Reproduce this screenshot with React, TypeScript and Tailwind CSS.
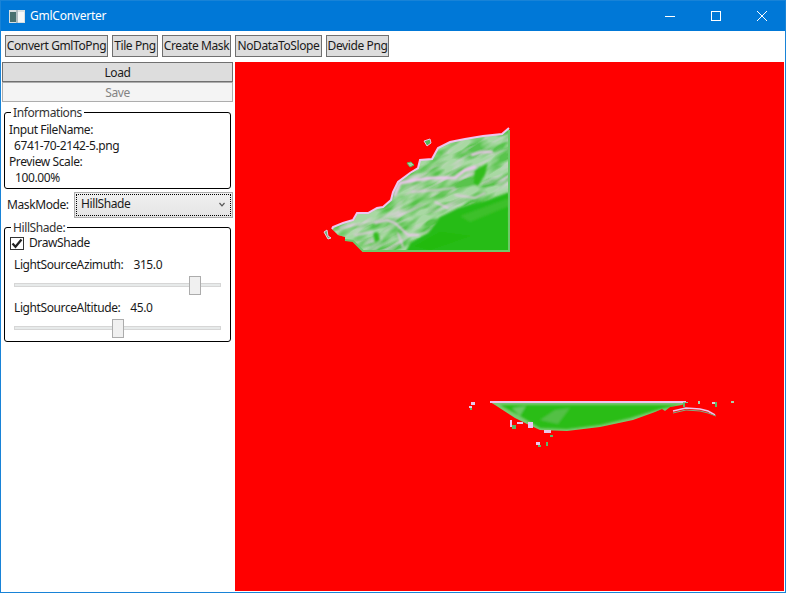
const toolbar = [
  { label: 'Convert GmlToPng', width: 'w-[103px]' },
  { label: 'Tile Png', width: 'w-[46px]' },
  { label: 'Create Mask', width: 'w-[69px]' },
  { label: 'NoDataToSlope', width: 'w-[87px]' },
  { label: 'Devide Png', width: 'w-[63px]' },
]

function Slider({ label, value, gap, thumb }: { label: string; value: string; gap: string; thumb: string }) {
  return (
    <div className="flex flex-col">
      <div className="flex h-[16px] items-center pl-[9px] leading-[16px]">
        <span>{label}</span>
        <span className={gap}>{value}</span>
      </div>
      <div className="relative mt-[10px] ml-[9px] h-[4px] w-[207px] border border-[#d6d6d6] bg-[#e7eaea]">
        <div className={`absolute top-[-8px] h-[19px] w-[12px] border border-[#acacac] bg-[#f0f0f0] ${thumb}`} />
      </div>
    </div>
  )
}

function TerrainMap() {
  return (
    <svg viewBox="235 62 549 529" className="block h-[529px] w-[549px]">
      <defs>
        <filter id="soft" x="-10%" y="-10%" width="120%" height="120%">
          <feGaussianBlur stdDeviation="0.8" />
        </filter>
        <filter id="pinkNoise" x="0" y="0" width="100%" height="100%" colorInterpolationFilters="sRGB">
          <feTurbulence type="fractalNoise" baseFrequency="0.035 0.16" numOctaves="2" seed="7" />
          <feColorMatrix values="0 0 0 0 0.9  0 0 0 0 0.8  0 0 0 0 0.9  2.4 0 0 0 -1.2" />
        </filter>
        <filter id="greenNoise" x="0" y="0" width="100%" height="100%" colorInterpolationFilters="sRGB">
          <feTurbulence type="fractalNoise" baseFrequency="0.04 0.12" numOctaves="2" seed="21" />
          <feColorMatrix values="0 0 0 0 0.35  0 0 0 0 0.77  0 0 0 0 0.3  3.6 0 0 0 -1.4" />
        </filter>
        <clipPath id="north">
          <path d="M509 128 L502 134 L483 136 L465 139 L450 142 L438 148 L432 159 L420 160 L418 168 L410 173 L398 182 L393 192 L391 200 L383 207 L377 208 L368 213 L357 213 L353 220 L343 223 L333 227 L332 229 L338 235 L345 237 L345 240 L353 241 L363 252 L510 251 Z" />
        </clipPath>
        <clipPath id="south">
          <path d="M490 402 L686 402 L682 405 L670 407 L665 411 L662 409 L655 412 L633 420 L600 427 L567 431 L540 430 L527 424 L515 418 L495 405 Z" />
        </clipPath>
      </defs>
      <rect x="235" y="62" width="549" height="529" fill="#ff0000" />

      {/* north patch */}
      <g clipPath="url(#north)">
        <rect x="325" y="125" width="190" height="130" fill="#a9d8a3" />
        <g transform="rotate(-28 420 190)">
          <rect x="290" y="80" width="260" height="220" filter="url(#greenNoise)" />
          <rect x="290" y="80" width="260" height="220" filter="url(#pinkNoise)" />
        </g>
        <g filter="url(#soft)">
          <path d="M473 183 L475 170 L488 163 L485 175 L478 186 Z" fill="#33be1f" />
          <path d="M373 233 L378 232 L380 240 L375 243 Z" fill="#33be1f" />
          <g fill="none" stroke="#f0c6f0" strokeLinecap="round">
            <path d="M395 195 L400 183 L415 180 L432 178 L455 178 L465 170 L475 167" strokeWidth="3" />
            <path d="M472 155 L482 152 L492 152" strokeWidth="2.5" />
            <path d="M375 223 L387 220 L395 223 L408 235 L418 235" strokeWidth="2" />
            <path d="M398 233 L403 247" strokeWidth="1.5" />
            <path d="M355 235 L372 232" strokeWidth="1.5" />
            <path d="M435 202 L448 208" strokeWidth="1.5" />
            <path d="M455 195 L475 198 L485 193" strokeWidth="1.5" />
            <path d="M412 192 L438 190 L455 188" strokeWidth="1.5" />
            <path d="M340 228 L360 224" strokeWidth="1.5" />
          </g>
          <path d="M509 192 L488 200 L458 208 L440 217 L428 233 L410 243 L406 252 L510 252 Z" fill="#27bc13" />
          <path d="M460 216 L509 198 L509 206 L470 222 Z" fill="#3cc02b" />
          <path d="M415 246 L440 232 L470 236 L430 250 Z" fill="#21ba0d" />
        </g>
      </g>
      <path
        d="M509 128 L502 134 L483 136 L465 139 L450 142 L438 148 L432 159 L420 160 L418 168 L410 173 L398 182 L393 192 L391 200 L383 207 L377 208 L368 213 L357 213 L353 220 L343 223 L333 227 L332 229"
        fill="none"
        stroke="#f0c4f0"
        strokeWidth="2"
      />
      <path d="M345 240 L353 241 L363 251 L509 251 L509 130" fill="none" stroke="#6fc968" strokeWidth="2" />
      <path d="M424 141 L430 139 L431 143 L427 146 Z" fill="#52b95a" stroke="#e8c8e8" strokeWidth="1" />
      <path d="M407 163 L411 162 L414 165 L410 167 Z" fill="#a8cfa8" stroke="#58b858" strokeWidth="1" />
      <path d="M324 232 L327 230 L328 236 L331 238 L328 239 Z" fill="#70b878" stroke="#e8c8e8" strokeWidth="1" />

      {/* south patch */}
      <g clipPath="url(#south)">
        <rect x="485" y="400" width="205" height="35" fill="#7ccb73" />
        <g filter="url(#soft)">
          <path d="M500 405 L680 405 L660 409 L630 418 L600 425 L567 429 L540 428 L520 416 Z" fill="#2bbd17" />
          <path d="M512 408 L526 406 L520 416 Z" fill="#6cc862" />
          <path d="M540 420 L555 410 L570 408 L558 424 Z" fill="#52c044" />
        </g>
      </g>
      <path d="M490 402 L686 402" fill="none" stroke="#efc4ef" strokeWidth="2" />
      <path d="M673 411 L686 408 L700 409 L708 411 L715 415" fill="none" stroke="#f0c4f0" strokeWidth="1.5" />
      <path d="M673 413 L686 410 L700 411 L708 413 L716 416" fill="none" stroke="#7fae7f" strokeWidth="1" />
      <g shapeRendering="crispEdges">
        <rect x="471" y="402" width="4" height="3" fill="#e8c8e8" />
        <rect x="469" y="406" width="3" height="2" fill="#e8c8e8" />
        <rect x="470" y="408" width="2" height="2" fill="#5fb868" />
        <rect x="510" y="420" width="2" height="7" fill="#efc4ef" />
        <rect x="512" y="425" width="4" height="4" fill="#5fb868" />
        <rect x="517" y="422" width="6" height="2" fill="#efc4ef" />
        <rect x="528" y="422" width="5" height="6" fill="#efc4ef" />
        <rect x="544" y="430" width="7" height="3" fill="#e8c8e8" />
        <rect x="550" y="435" width="3" height="2" fill="#5fb868" />
        <rect x="536" y="442" width="4" height="3" fill="#efc4ef" />
        <rect x="538" y="445" width="3" height="2" fill="#5fb868" />
        <rect x="546" y="442" width="2" height="4" fill="#5fb868" />
        <rect x="683" y="402" width="5" height="1" fill="#8fc08f" />
        <rect x="683" y="403" width="2" height="4" fill="#5fb868" />
        <rect x="698" y="401" width="2" height="3" fill="#a8d0a8" />
        <rect x="712" y="402" width="5" height="2" fill="#d8d0d8" />
        <rect x="715" y="402" width="2" height="5" fill="#5fb868" />
        <rect x="731" y="401" width="3" height="2" fill="#a8d0a8" />
      </g>
    </svg>
  )
}

export default function App() {
  return (
    <div className="flex h-[593px] w-[786px] flex-col overflow-hidden border border-[#1883d7] bg-white font-['Noto_Sans',sans-serif] text-[12px] tracking-[-0.4px] text-[#1a1a1a]">
      {/* Title bar */}
      <div className="flex h-[30px] items-center bg-[#0078d7] tracking-[-0.25px] text-white">
        <svg width="16" height="13" viewBox="0 0 16 13" className="ml-[8px]">
          <rect x="0" y="0" width="16" height="13" fill="#d8e0e2" />
          <rect x="1" y="2" width="6" height="10" fill="#47706f" />
          <rect x="9" y="2" width="6" height="10" fill="#f4f7f7" />
          <rect x="7" y="0" width="2" height="13" fill="#aebcc0" />
        </svg>
        <span className="ml-[5px]">GmlConverter</span>
        <div className="ml-auto flex h-full">
          <div className="flex w-[46px] items-center justify-center">
            <div className="h-px w-[10px] bg-white" />
          </div>
          <div className="flex w-[46px] items-center justify-center">
            <div className="h-[10px] w-[10px] border border-white" />
          </div>
          <div className="flex w-[46px] items-center justify-center">
            <svg width="10" height="10" viewBox="0 0 10 10" stroke="white" strokeWidth="1">
              <path d="M0 0 L10 10 M10 0 L0 10" />
            </svg>
          </div>
        </div>
      </div>

      {/* Toolbar */}
      <div className="flex h-[31px] items-start gap-[4px] bg-white pl-[4px] pt-[4px]">
        {toolbar.map(b => (
          <button
            key={b.label}
            className={`flex h-[22px] items-center justify-center whitespace-nowrap border border-[#707070] bg-[#dddddd] ${b.width}`}
          >
            {b.label}
          </button>
        ))}
      </div>

      <div className="flex flex-1">
        {/* Side panel */}
        <div className="flex w-[234px] flex-col pl-[1px] pr-[2px]">
          <button className="h-[20px] border border-[#707070] bg-[#dddddd] leading-[20px]">Load</button>
          <button className="h-[20px] border border-[#adadad] bg-[#f4f4f4] leading-[20px] text-[#838383]">Save</button>

          <fieldset className="mt-[2px] ml-[2px] w-[227px] rounded-[3px] border border-black pb-[2px]">
            <legend className="ml-[6px] px-[2px] pt-[2px] leading-[14px] text-[#333]">Informations</legend>
            <div className="mt-[2px] pl-[4px] leading-[16px]">Input FileName:</div>
            <div className="pl-[9px] leading-[16px]">6741-70-2142-5.png</div>
            <div className="pl-[4px] leading-[16px]">Preview Scale:</div>
            <div className="pl-[10px] leading-[16px]">100.00%</div>
          </fieldset>

          <div className="mt-[3px] flex h-[26px] items-center">
            <span className="ml-[5px]">MaskMode:</span>
            <div className="ml-auto flex h-[26px] w-[159px] items-center border border-[#acacac] bg-gradient-to-b from-[#f0f0f0] to-[#e5e5e5] p-[1px]">
              <div className="flex h-full w-full items-center justify-between border border-dotted border-black pb-[2px] pl-[4px] pr-[5px]">
                <span>HillShade</span>
                <svg width="6" height="5" viewBox="0 0 6 5" fill="none" stroke="#555" strokeWidth="1.2">
                  <path d="M0.5 1 L3 3.8 L5.5 1" />
                </svg>
              </div>
            </div>
          </div>

          <fieldset className="mt-[1px] ml-[2px] w-[227px] rounded-[3px] border border-black pb-[2px]">
            <legend className="ml-[6px] px-[2px] pt-[2px] leading-[14px] text-[#333]">HillShade:</legend>
            <div className="mt-[1px] flex h-[14px] items-center gap-[5px] pl-[5px]">
              <div className="flex h-[13px] w-[14px] items-center justify-center border border-[#333] bg-white">
                <svg width="12" height="11" viewBox="0 0 12 11" fill="none" stroke="#222" strokeWidth="2.2">
                  <path d="M1.5 5.5 L4.5 8.8 L10.5 1.5" />
                </svg>
              </div>
              <span>DrawShade</span>
            </div>
            <div className="mt-[7px] flex flex-col gap-[13px] pb-[9px]">
              <Slider label="LightSourceAzimuth:" value="315.0" gap="ml-[10px]" thumb="left-[174px]" />
              <Slider label="LightSourceAltitude:" value="45.0" gap="ml-[10px]" thumb="left-[97px]" />
            </div>
          </fieldset>
        </div>

        {/* Preview */}
        <div className="pb-[1px] pr-[1px]">
          <TerrainMap />
        </div>
      </div>
    </div>
  )
}
